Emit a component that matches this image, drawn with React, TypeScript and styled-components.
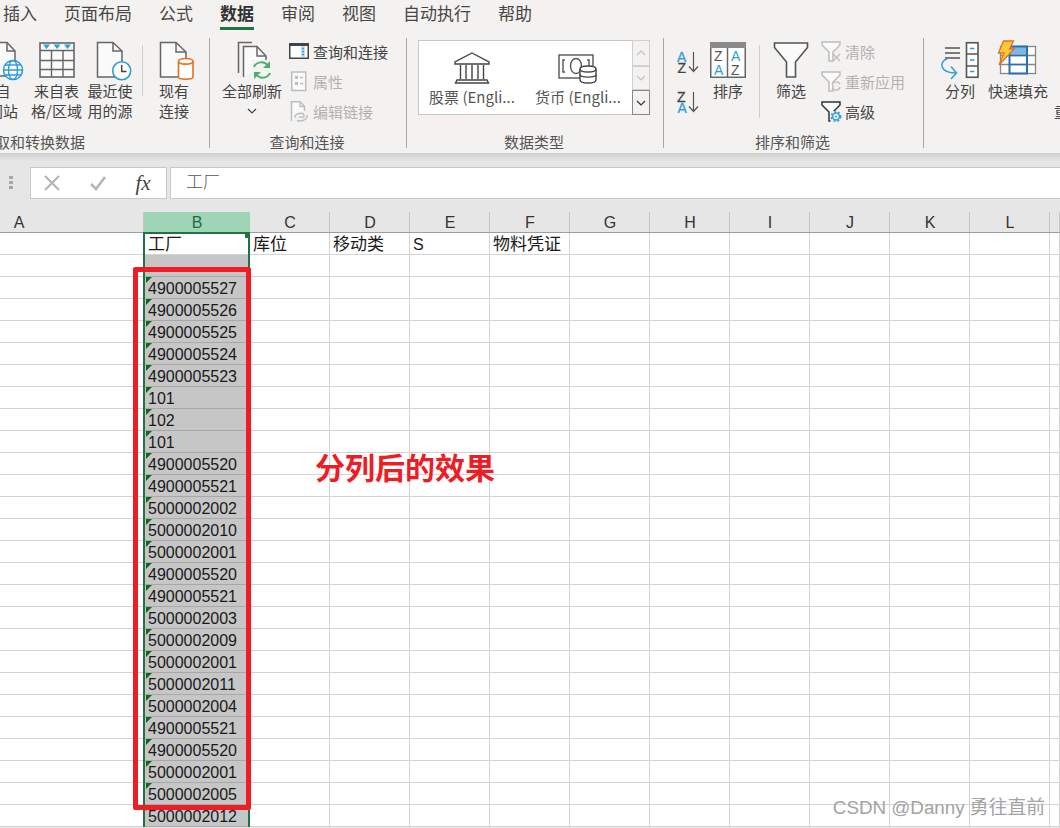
import styled, { createGlobalStyle } from "styled-components";

const GlobalStyle = createGlobalStyle`
  html, body {
    margin: 0;
    padding: 0;
    overflow: hidden;
    background: #fff;
  }
`;

const UI_FONT = `"Noto Sans CJK SC", "Noto Sans", sans-serif`;
const CELL_FONT = `"Liberation Sans", "Noto Sans CJK SC", sans-serif`;

const Page = styled.div`
  position: relative;
  width: 1060px;
  height: 828px;
  overflow: hidden;
  font-family: ${UI_FONT};
  color: #444;
  background: #e6e6e6;
`;

/* 上面的选项卡 */
const Tabs = styled.div`
  display: flex;
  gap: 27px;
  height: 30px;
  padding-left: 3px;
  background: #f3f2f1;
`;

const Tab = styled.div<{ $active?: boolean }>`
  font-size: 17px;
  line-height: 25px;
  font-weight: ${(p) => (p.$active ? 700 : 400)};
  color: ${(p) => (p.$active ? "#333" : "#484644")};
  border-bottom: 3px solid ${(p) => (p.$active ? "#217346" : "transparent")};
  box-sizing: border-box;
  height: 30px;
`;

const Ribbon = styled.div`
  position: relative;
  display: flex;
  height: 123px;
  background: #f3f2f1;
  overflow: hidden;
`;

const Shadow = styled.div`
  height: 8px;
  background: linear-gradient(#cfcfcf, #e6e6e6);
`;

const Group = styled.div<{ $w: number; $shift?: number }>`
  flex: none;
  display: flex;
  flex-direction: column;
  width: ${(p) => p.$w}px;
  margin-left: ${(p) => p.$shift ?? 0}px;
`;

const GroupBody = styled.div<{ $end?: boolean; $pad?: number }>`
  display: flex;
  height: 102px;
  justify-content: ${(p) => (p.$end ? "flex-end" : "flex-start")};
  padding-left: ${(p) => p.$pad ?? 0}px;
  padding-right: ${(p) => (p.$end ? 8 : 0)}px;
`;

const GroupLabel = styled.div`
  height: 20px;
  padding-right: 2px;
  font-size: 15px;
  line-height: 20px;
  text-align: center;
  white-space: nowrap;
  color: #555;
`;

const GroupRule = styled.div`
  flex: none;
  width: 1px;
  margin: 8px 0 5px;
  background: #a9a7a5;
`;

const BigButton = styled.div<{ $w: number; $ml?: number }>`
  flex: none;
  width: ${(p) => p.$w}px;
  margin-left: ${(p) => p.$ml ?? 0}px;
  padding-top: 10px;
  display: flex;
  flex-direction: column;
  align-items: center;
  font-size: 15px;
  line-height: 20px;
  text-align: center;
  white-space: nowrap;

  svg {
    display: block;
    flex: none;
    overflow: visible;
    margin-bottom: 1px;
  }
`;

const Chevron = styled.div`
  height: 14px;
  display: flex;
  justify-content: center;
  align-items: center;
  margin-top: 3px;
`;

const InnerRule = styled.div<{ $ml: number; $h: number; $mr?: number }>`
  flex: none;
  width: 1px;
  height: ${(p) => p.$h}px;
  margin: 15px ${(p) => p.$mr ?? 0}px 0 ${(p) => p.$ml}px;
  background: #cfcdcb;
`;

const SmallColumn = styled.div<{ $ml: number }>`
  flex: none;
  margin-left: ${(p) => p.$ml}px;
  padding-top: 6px;
`;

const SmallRow = styled.div<{ $off?: boolean }>`
  display: flex;
  align-items: center;
  height: 30px;
  font-size: 15px;
  white-space: nowrap;
  color: ${(p) => (p.$off ? "#b3b1af" : "#444")};

  svg {
    flex: none;
    display: block;
    width: 20px;
    margin-right: 4px;
    overflow: visible;
  }
`;

const Gallery = styled.div`
  display: flex;
  width: 232px;
  height: 75px;
  margin: 10px 0 0 11px;
  box-sizing: border-box;
  flex: none;
`;

const GalleryItems = styled.div`
  display: flex;
  width: 214px;
  background: #fff;
  border: 1px solid #c8c6c4;
  border-right: 0;
  box-sizing: border-box;
`;

const GalleryItem = styled.div`
  width: 106px;
  flex: none;
  display: flex;
  flex-direction: column;
  align-items: center;
  padding-top: 11px;
  font-size: 15px;
  line-height: 20px;
  color: #555;
  white-space: nowrap;

  svg {
    display: block;
    height: 32px;
    margin-bottom: 3px;
    overflow: visible;
  }
`;

const GalleryScroll = styled.div`
  display: flex;
  flex-direction: column;
  width: 18px;
`;

const ScrollButton = styled.div<{ $h: number; $strong?: boolean }>`
  height: ${(p) => p.$h}px;
  box-sizing: border-box;
  border: 1px solid ${(p) => (p.$strong ? "#8a8886" : "#d2d0ce")};
  display: flex;
  align-items: center;
  justify-content: center;
`;

const SortColumn = styled.div`
  flex: none;
  width: 24px;
  padding-top: 21px;
  display: flex;
  flex-direction: column;
  gap: 18px;

  svg {
    display: block;
  }
`;

/* 编辑栏 */
const FormulaBar = styled.div`
  display: flex;
  height: 51px;
  padding-top: 6px;
  box-sizing: border-box;
  background: #e6e6e6;
`;

const Grip = styled.div`
  width: 4px;
  height: 14px;
  margin: 9px 17px 0 9px;
  flex: none;
  background: repeating-linear-gradient(#a6a6a6 0 3px, transparent 3px 5px);
`;

const NameButtons = styled.div`
  flex: none;
  display: flex;
  align-items: center;
  width: 137px;
  height: 32px;
  box-sizing: border-box;
  background: #fff;
  border: 1px solid #c8c8c8;
`;

const BarIcon = styled.div<{ $w: number }>`
  width: ${(p) => p.$w}px;
  flex: none;
  display: flex;
  justify-content: center;
  color: #444;
`;

const FxText = styled.span`
  font-family: "Liberation Serif", serif;
  font-style: italic;
  font-size: 21px;
  line-height: 24px;
`;

const FormulaInput = styled.div`
  flex: 1;
  height: 32px;
  margin-left: 3px;
  padding-left: 15px;
  box-sizing: border-box;
  background: #fff;
  border: 1px solid #c8c8c8;
  border-right: 0;
  font-size: 17px;
  font-weight: 300;
  line-height: 26px;
  color: #555;
`;

/* 表格 */
const HeaderRow = styled.div`
  display: flex;
  height: 21px;
  box-sizing: border-box;
  background: #e6e6e6;
  border-bottom: 1px solid #9e9e9e;
`;

const HeaderCell = styled.div<{ $w: number; $active?: boolean; $pr?: number }>`
  flex: none;
  width: ${(p) => p.$w}px;
  box-sizing: border-box;
  padding-left: 1px;
  padding-right: ${(p) => p.$pr ?? 0}px;
  text-align: center;
  font-family: ${CELL_FONT};
  font-size: 16px;
  line-height: 21px;
  color: ${(p) => (p.$active ? "#1f6b41" : "#333")};
  background: ${(p) => (p.$active ? "#9fd5b7" : "transparent")};
  border-right: 1px solid ${(p) => (p.$active ? "#9fd5b7" : "#c4c4c4")};
`;

const Sheet = styled.div`
  position: relative;
  background: #fff;
`;

const Row = styled.div`
  display: flex;
  height: 22px;
`;

const Cell = styled.div<{ $w: number; $inB?: boolean; $selected?: boolean; $mark?: boolean; $cjk?: boolean }>`
  position: relative;
  flex: none;
  width: ${(p) => p.$w}px;
  box-sizing: border-box;
  padding-left: ${(p) => (p.$inB ? 4 : 3)}px;
  white-space: nowrap;
  font-family: ${CELL_FONT};
  font-size: ${(p) => (p.$cjk ? 17 : 16)}px;
  line-height: 23px;
  color: #1a1a1a;
  background: ${(p) => (p.$selected ? "#c6c6c6" : "#fff")};
  border-right: 1px solid #d4d4d4;
  border-bottom: 1px solid ${(p) => (p.$selected ? "#a8a8a8" : "#d4d4d4")};

  &::before {
    content: "";
    display: ${(p) => (p.$mark ? "block" : "none")};
    position: absolute;
    left: 2px;
    top: 0;
    border-top: 6px solid #0b6a1f;
    border-right: 6px solid transparent;
  }
`;

const SelectionFrame = styled.div`
  position: absolute;
  left: 143px;
  top: -1px;
  bottom: 0;
  width: 107px;
  box-sizing: border-box;
  border: 2px solid #217346;
  border-bottom: 0;
  pointer-events: none;

  &::after {
    content: "";
    position: absolute;
    right: -2px;
    top: -1px;
    width: 5px;
    height: 5px;
    background: #217346;
  }
`;

const RedFrame = styled.div`
  position: absolute;
  left: 133px;
  top: 34px;
  width: 118px;
  height: 543px;
  box-sizing: border-box;
  border: 5px solid #ee1c25;
  border-radius: 2px;
`;

const RedNote = styled.div`
  position: absolute;
  left: 315px;
  top: 211px;
  font-size: 30px;
  font-weight: 700;
  line-height: 44px;
  color: #ee1c25;
  white-space: nowrap;
`;

const Watermark = styled.div`
  position: absolute;
  right: 15px;
  bottom: 7px;
  font-family: ${CELL_FONT};
  font-size: 18.8px;
  line-height: 26px;
  color: #a3a3a3;
  white-space: nowrap;
`;

const STROKE = "#666";
const BLUE = "#2e9bdb";
const OFF = "#bdbdbd";

const WebIcon = () => (
  <svg width="42" height="40" viewBox="0 0 42 40">
    <path d="M9.5 2.5H25L33 11V36H9.5Z" fill="#fafafa" stroke={STROKE} strokeWidth="1.5" />
    <path d="M25 2.5V11H33" fill="none" stroke={STROKE} strokeWidth="1.5" />
    <circle cx="31" cy="30" r="9.5" fill="#fff" stroke={BLUE} strokeWidth="1.6" />
    <ellipse cx="31" cy="30" rx="4.5" ry="9.5" fill="none" stroke={BLUE} strokeWidth="1.4" />
    <path d="M21.5 30H40.5M23 25H39M23 35H39" fill="none" stroke={BLUE} strokeWidth="1.4" />
  </svg>
);

const TableIcon = () => (
  <svg width="38" height="40" viewBox="0 0 38 40">
    <rect x="2" y="3" width="34" height="34" fill="#fafafa" stroke={STROKE} strokeWidth="1.6" />
    <path d="M2 10.5H36M2 20.5H36M2 29.5H36M13.5 10.5V37M25 10.5V37" stroke={STROKE} strokeWidth="1.4" fill="none" />
    <path d="M5 4.5H12L8.5 9ZM15.5 4.5H22.5L19 9ZM26 4.5H33L29.5 9Z" fill={BLUE} />
  </svg>
);

const RecentIcon = () => (
  <svg width="44" height="40" viewBox="0 0 44 40">
    <path d="M9.5 2.5H25L34 11V37H9.5Z" fill="#fafafa" stroke={STROKE} strokeWidth="1.5" />
    <path d="M25 2.5V11H34" fill="none" stroke={STROKE} strokeWidth="1.5" />
    <circle cx="33.7" cy="30.7" r="9" fill="#fff" stroke={BLUE} strokeWidth="1.6" />
    <path d="M33.7 25V31.5H38.5" fill="none" stroke="#444" strokeWidth="1.5" />
  </svg>
);

const ConnectionIcon = () => (
  <svg width="40" height="40" viewBox="0 0 40 40">
    <path d="M6.5 2.5H22L32 12V37H6.5Z" fill="#fafafa" stroke={STROKE} strokeWidth="1.5" />
    <path d="M22 2.5V12H32" fill="none" stroke={STROKE} strokeWidth="1.5" />
    <path d="M24.5 21.5C24.5 17.5 39 17.5 39 21.5V37C39 40 24.5 40 24.5 37Z" fill="#fff" stroke="#e2711d" strokeWidth="1.6" />
    <path d="M24.5 21.5C24.5 25 39 25 39 21.5" fill="none" stroke="#e2711d" strokeWidth="1.6" />
  </svg>
);

const RefreshIcon = () => (
  <svg width="44" height="40" viewBox="0 0 44 40">
    <path d="M8.5 33V2.5H22" fill="none" stroke={STROKE} strokeWidth="1.5" />
    <path d="M13.5 37V6.5H27L36 16V22" fill="#fafafa" stroke={STROKE} strokeWidth="1.5" />
    <path d="M27 6.5V16H36" fill="none" stroke={STROKE} strokeWidth="1.5" />
    <rect x="22" y="20" width="20" height="20" fill="#f3f2f1" />
    <path d="M24 27C26 22 34 20 38 26" fill="none" stroke="#4caf6f" strokeWidth="2" />
    <path d="M40 21V28H33Z" fill="#4caf6f" />
    <path d="M40 33C38 38 30 40 26 34" fill="none" stroke="#4caf6f" strokeWidth="2" />
    <path d="M24 39V32H31Z" fill="#4caf6f" />
  </svg>
);

const QueryPanelIcon = () => (
  <svg width="20" height="16" viewBox="0 0 20 16">
    <rect x="0.75" y="0.75" width="18.5" height="14.5" fill="#fff" stroke="#444" strokeWidth="1.5" />
    <rect x="0" y="0" width="20" height="3" fill="#444" />
    <rect x="12" y="3" width="4" height="11" fill="#bfe0f5" />
    <path d="M13 5.5H15M13 8.5H15M13 11.5H15" stroke={BLUE} strokeWidth="1.5" />
  </svg>
);

const PropsIcon = () => (
  <svg width="20" height="20" viewBox="0 0 20 20">
    <rect x="2.75" y="1" width="14" height="18.5" fill="#fafafa" stroke={OFF} strokeWidth="1.5" />
    <path d="M6 5H9V8H6ZM6 11H9V14H6Z" fill={OFF} />
    <path d="M11 6.5H14M11 12.5H14" stroke={OFF} strokeWidth="1.5" />
  </svg>
);

const EditLinksIcon = () => (
  <svg width="20" height="20" viewBox="0 0 20 20">
    <path d="M2.5 20V0.8H11L15.5 5.5V10" fill="#fafafa" stroke={OFF} strokeWidth="1.5" />
    <path d="M11 0.8V5.5H15.5" fill="none" stroke={OFF} strokeWidth="1.3" />
    <path d="M6 17C5 12 14 11 15 14C16 17 10 17 11 15M8 19.5C13 21 19 18 18 14" fill="#f3f2f1" stroke={OFF} strokeWidth="1.4" />
  </svg>
);

const BankIcon = () => (
  <svg width="36" height="32" viewBox="0 0 36 32">
    <path d="M18 1L35 10V12H1V10Z" fill="#fff" stroke="#444" strokeWidth="1.4" />
    <path d="M6.5 13V27M12 13V27M18 13V27M24 13V27M29.5 13V27" stroke="#444" strokeWidth="1.4" />
    <path d="M3 28H33L34.5 31H1.5Z" fill="#fff" stroke="#444" strokeWidth="1.4" />
  </svg>
);

const MoneyIcon = () => (
  <svg width="40" height="32" viewBox="0 0 40 32">
    <rect x="1" y="3" width="34" height="23" fill="#fff" stroke="#555" strokeWidth="1.4" />
    <ellipse cx="18" cy="14" rx="5.5" ry="7.5" fill="none" stroke="#555" strokeWidth="1.4" />
    <path d="M7 8H5V20H7M29 8H31V20H29" fill="none" stroke="#555" strokeWidth="1.4" />
    <path d="M22 17C22 13 38 13 38 17V28C38 32 22 32 22 28Z" fill="#fff" stroke="#444" strokeWidth="1.4" />
    <path d="M22 17C22 21 38 21 38 17M22 22.5C22 26 38 26 38 22.5" fill="none" stroke="#444" strokeWidth="1.4" />
  </svg>
);

const SortIcon = ({ top, bottom, blueTop }: { top: string; bottom: string; blueTop: boolean }) => (
  <svg width="24" height="22" viewBox="0 0 24 22" fontFamily={CELL_FONT} fontSize="14" strokeWidth="0.3">
    <text x="0" y="11" fill={blueTop ? BLUE : "#444"} stroke={blueTop ? BLUE : "#444"}>{top}</text>
    <text x="0.5" y="21.5" fill={blueTop ? "#444" : BLUE} stroke={blueTop ? "#444" : BLUE}>{bottom}</text>
    <path d="M16.5 1V20M12 15.5L16.5 20.5L21 15.5" fill="none" stroke="#555" strokeWidth="1.2" />
  </svg>
);

const SortBigIcon = () => (
  <svg width="36" height="40" viewBox="0 0 36 40" fontFamily={CELL_FONT} fontSize="14">
    <rect x="0.75" y="2.75" width="34.5" height="34.5" fill="#fff" stroke={STROKE} strokeWidth="1.5" />
    <rect x="0" y="2" width="36" height="6" fill="#8a8a8a" />
    <path d="M17.5 8V37" stroke={STROKE} strokeWidth="1.5" />
    <text x="4" y="21" fill="#555">Z</text>
    <text x="4" y="34.5" fill={BLUE}>A</text>
    <text x="21" y="21" fill={BLUE}>A</text>
    <text x="21" y="34.5" fill="#555">Z</text>
  </svg>
);

const FunnelIcon = () => (
  <svg width="36" height="40" viewBox="0 0 36 40">
    <path d="M1.5 3H34.5V7.5L22.5 22V37H13.5V22L1.5 7.5Z" fill="#fafafa" stroke="#555" strokeWidth="1.6" />
  </svg>
);

const SmallFunnel = ({ color }: { color: string }) => (
  <path d="M1 1H19V4L12 11V20H8V11L1 4Z" fill="#fafafa" stroke={color} strokeWidth="1.5" />
);

const ClearIcon = () => (
  <svg width="20" height="20" viewBox="0 0 20 20">
    <SmallFunnel color={OFF} />
    <path d="M12 13L19 20M19 13L12 20" stroke={OFF} strokeWidth="1.4" />
  </svg>
);

const ReapplyIcon = () => (
  <svg width="20" height="20" viewBox="0 0 20 20">
    <SmallFunnel color={OFF} />
    <path d="M11 14C12 10 17 10 19 13M19 16C18 20 13 20 11 17" fill="#f3f2f1" stroke={OFF} strokeWidth="1.4" />
  </svg>
);

const AdvancedIcon = () => (
  <svg width="20" height="20" viewBox="0 0 20 20">
    <SmallFunnel color="#333" />
    <rect x="9.5" y="10" width="11" height="11" fill="#f3f2f1" />
    <circle cx="15" cy="15.5" r="3.4" fill="none" stroke={BLUE} strokeWidth="1.5" />
    <circle cx="15" cy="15.5" r="4.8" fill="none" stroke={BLUE} strokeWidth="1.4" strokeDasharray="2 2" />
    <circle cx="15" cy="15.5" r="1" fill={BLUE} />
  </svg>
);

const SplitIcon = () => (
  <svg width="40" height="40" viewBox="0 0 40 40">
    <path d="M5 8H20M5 13H20M5 18H20" stroke="#555" strokeWidth="1.5" />
    <rect x="26.5" y="2.75" width="11.5" height="34.5" fill="#fff" stroke="#555" strokeWidth="1.6" />
    <path d="M26.5 14H38M26.5 26H38" stroke="#555" strokeWidth="1.6" />
    <path d="M30 8.5H34.5M30 20H34.5M30 31.5H34.5" stroke={BLUE} strokeWidth="1.5" />
    <path d="M7 19C-1 21 -1 33 16 33" fill="none" stroke={BLUE} strokeWidth="1.5" />
    <path d="M11 26.5L16.5 33L11 39" fill="none" stroke={BLUE} strokeWidth="1.5" />
  </svg>
);

const FlashFillIcon = () => (
  <svg width="44" height="40" viewBox="0 0 44 40">
    <rect x="4.5" y="6.5" width="35" height="27" fill="#fff" stroke="#888" strokeWidth="1.3" />
    <path d="M4.5 15.5H39.5M4.5 24.5H39.5M31 6.5V33.5" stroke="#888" strokeWidth="1.3" />
    <rect x="13.5" y="6.5" width="17.5" height="9" fill="#7fb6e6" />
    <rect x="13.5" y="6.5" width="17.5" height="27" fill="none" stroke="#2a6fb0" strokeWidth="2" />
    <path d="M13.5 15.5H31M13.5 24.5H31" stroke="#2a6fb0" strokeWidth="1.6" />
    <path d="M7.5 1H17.5L13.5 9H18L3 25L8 13H2.5Z" fill="#ffc83d" stroke="#e2711d" strokeWidth="1.3" />
  </svg>
);

const TinyChevron = ({ color, up }: { color: string; up?: boolean }) => (
  <svg width="10" height="6" viewBox="0 0 10 6">
    <path d={up ? "M1 5L5 1L9 5" : "M1 1L5 5L9 1"} fill="none" stroke={color} strokeWidth="1.2" />
  </svg>
);

const COLUMNS = [
  { name: "A", w: 144 },
  { name: "B", w: 106 },
  { name: "C", w: 80 },
  { name: "D", w: 80 },
  { name: "E", w: 80 },
  { name: "F", w: 80 },
  { name: "G", w: 80 },
  { name: "H", w: 80 },
  { name: "I", w: 80 },
  { name: "J", w: 80 },
  { name: "K", w: 80 },
  { name: "L", w: 80 },
  { name: "", w: 10 },
];

const TITLES: Record<string, string> = { B: "工厂", C: "库位", D: "移动类", E: "S", F: "物料凭证" };

const VALUES = [
  "4900005527", "4900005526", "4900005525", "4900005524", "4900005523",
  "101", "102", "101", "4900005520", "4900005521",
  "5000002002", "5000002010", "5000002001", "4900005520", "4900005521",
  "5000002003", "5000002009", "5000002001", "5000002011", "5000002004",
  "4900005521", "4900005520", "5000002001", "5000002005", "5000002012",
];

const TABS = ["插入", "页面布局", "公式", "数据", "审阅", "视图", "自动执行", "帮助"];

const App = () => {
  const rowCount = 27;

  return (
    <Page>
      <GlobalStyle />
      <Tabs>
        {TABS.map((t) => (
          <Tab key={t} $active={t === "数据"}>{t}</Tab>
        ))}
      </Tabs>

      <Ribbon>
        <Group $w={351} $shift={-142}>
          <GroupBody $end>
            <BigButton $w={54}><WebIcon /><span>自</span><span>网站</span></BigButton>
            <BigButton $w={53}><TableIcon /><span>来自表</span><span>格/区域</span></BigButton>
            <BigButton $w={54}><RecentIcon /><span>最近使</span><span>用的源</span></BigButton>
            <InnerRule $ml={5} $mr={4} $h={51} />
            <BigButton $w={54}><ConnectionIcon /><span>现有</span><span>连接</span></BigButton>
          </GroupBody>
          <GroupLabel>获取和转换数据</GroupLabel>
        </Group>
        <GroupRule />

        <Group $w={196}>
          <GroupBody $pad={9}>
            <BigButton $w={66}>
              <RefreshIcon />
              <span>全部刷新</span>
              <Chevron><TinyChevron color="#444" /></Chevron>
            </BigButton>
            <SmallColumn $ml={4}>
              <SmallRow><QueryPanelIcon />查询和连接</SmallRow>
              <SmallRow $off><PropsIcon />属性</SmallRow>
              <SmallRow $off><EditLinksIcon />编辑链接</SmallRow>
            </SmallColumn>
          </GroupBody>
          <GroupLabel>查询和连接</GroupLabel>
        </Group>
        <GroupRule />

        <Group $w={256}>
          <GroupBody>
            <Gallery>
              <GalleryItems>
                <GalleryItem><BankIcon /><span>股票 (Engli...</span></GalleryItem>
                <GalleryItem><MoneyIcon /><span>货币 (Engli...</span></GalleryItem>
              </GalleryItems>
              <GalleryScroll>
                <ScrollButton $h={26}><TinyChevron color="#c4c2c0" up /></ScrollButton>
                <ScrollButton $h={24}><TinyChevron color="#c4c2c0" /></ScrollButton>
                <ScrollButton $h={25} $strong><TinyChevron color="#333" /></ScrollButton>
              </GalleryScroll>
            </Gallery>
          </GroupBody>
          <GroupLabel>数据类型</GroupLabel>
        </Group>
        <GroupRule />

        <Group $w={259}>
          <GroupBody $pad={13}>
            <SortColumn>
              <SortIcon top="A" bottom="Z" blueTop />
              <SortIcon top="Z" bottom="A" blueTop={false} />
            </SortColumn>
            <BigButton $w={50} $ml={2}><SortBigIcon /><span>排序</span></BigButton>
            <InnerRule $ml={6} $h={73} />
            <BigButton $w={54} $ml={4}><FunnelIcon /><span>筛选</span></BigButton>
            <SmallColumn $ml={3}>
              <SmallRow $off><ClearIcon />清除</SmallRow>
              <SmallRow $off><ReapplyIcon />重新应用</SmallRow>
              <SmallRow><AdvancedIcon />高级</SmallRow>
            </SmallColumn>
          </GroupBody>
          <GroupLabel>排序和筛选</GroupLabel>
        </Group>
        <GroupRule />

        <Group $w={140}>
          <GroupBody $pad={14}>
            <BigButton $w={44}><SplitIcon /><span>分列</span></BigButton>
            <BigButton $w={66} $ml={3}><FlashFillIcon /><span>快速填充</span></BigButton>
            <SmallColumn $ml={3}>
              <SmallRow />
              <SmallRow />
              <SmallRow>重复值</SmallRow>
            </SmallColumn>
          </GroupBody>
        </Group>
      </Ribbon>
      <Shadow />

      <FormulaBar>
        <Grip />
        <NameButtons>
          <BarIcon $w={42}>
            <svg width="18" height="18" viewBox="0 0 18 18">
              <path d="M2 2L16 16M16 2L2 16" stroke="#b5b5b5" strokeWidth="2.2" />
            </svg>
          </BarIcon>
          <BarIcon $w={50}>
            <svg width="18" height="18" viewBox="0 0 18 18">
              <path d="M2 10L7 15L16 3" fill="none" stroke="#b5b5b5" strokeWidth="2.6" />
            </svg>
          </BarIcon>
          <BarIcon $w={40}><FxText>fx</FxText></BarIcon>
        </NameButtons>
        <FormulaInput>工厂</FormulaInput>
      </FormulaBar>

      <HeaderRow>
        {COLUMNS.map((c) => (
          <HeaderCell key={c.name || "end"} $w={c.w} $active={c.name === "B"} $pr={c.name === "A" ? 106 : 0}>
            {c.name}
          </HeaderCell>
        ))}
      </HeaderRow>

      <Sheet>
        {Array.from({ length: rowCount }).map((_, r) => (
          <Row key={r}>
            {COLUMNS.map((c) => {
              const isB = c.name === "B";
              const value = isB && r >= 2 ? VALUES[r - 2] : undefined;
              const title = r === 0 ? TITLES[c.name] : undefined;
              return (
                <Cell
                  key={c.name || "end"}
                  $w={c.w}
                  $inB={isB}
                  $selected={isB && r > 0}
                  $mark={isB && r >= 2}
                  $cjk={r === 0 && c.name !== "E"}
                >
                  {title ?? value}
                </Cell>
              );
            })}
          </Row>
        ))}
        <SelectionFrame />
        <RedFrame />
        <RedNote>分列后的效果</RedNote>
      </Sheet>

      <Watermark>CSDN @Danny 勇往直前</Watermark>
    </Page>
  );
};

export default App;
